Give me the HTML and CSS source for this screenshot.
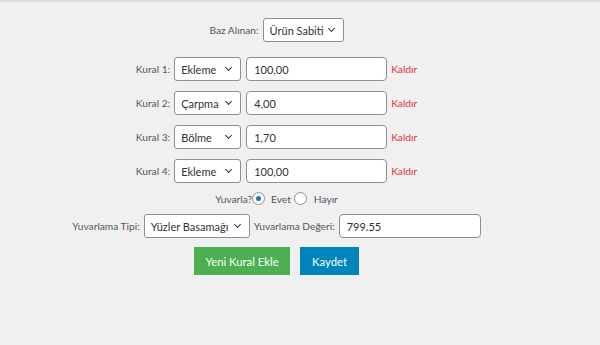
FILE: index.html
```html
<!DOCTYPE html>
<html lang="tr">
<head>
<meta charset="utf-8">
<link rel="stylesheet" href="styles.css">
</head>
<body>
<div class="topline"></div>
<div class="wrap">
  <div class="row base">
    <span class="lbl">Baz Alınan:</span>
    <span class="sel w-base">Ürün Sabiti<i class="chev"></i></span>
  </div>
  <div class="rules">
    <div class="row rule">
      <span class="lbl">Kural 1:</span>
      <span class="sel w-op">Ekleme<i class="chev"></i></span>
      <span class="inp w-val">100,00</span>
      <span class="remove">Kaldır</span>
    </div>
    <div class="row rule">
      <span class="lbl">Kural 2:</span>
      <span class="sel w-op">Çarpma<i class="chev"></i></span>
      <span class="inp w-val">4,00</span>
      <span class="remove">Kaldır</span>
    </div>
    <div class="row rule">
      <span class="lbl">Kural 3:</span>
      <span class="sel w-op">Bölme<i class="chev"></i></span>
      <span class="inp w-val">1,70</span>
      <span class="remove">Kaldır</span>
    </div>
    <div class="row rule">
      <span class="lbl">Kural 4:</span>
      <span class="sel w-op">Ekleme<i class="chev"></i></span>
      <span class="inp w-val">100,00</span>
      <span class="remove">Kaldır</span>
    </div>
  </div>
  <div class="row round">
    <span class="lbl">Yuvarla?</span>
    <span class="radio on"></span>
    <span class="lbl opt">Evet</span>
    <span class="radio"></span>
    <span class="lbl opt2">Hayır</span>
  </div>
  <div class="row tipi">
    <span class="lbl">Yuvarlama Tipi:</span>
    <span class="sel w-tip">Yüzler Basamağı<i class="chev"></i></span>
    <span class="lbl">Yuvarlama Değeri:</span>
    <span class="inp w-rv">799.55</span>
  </div>
  <div class="row btns">
    <span class="btn green">Yeni Kural Ekle</span>
    <span class="btn blue">Kaydet</span>
  </div>
</div>
</body>
</html>
```
FILE: styles.css
```css
html, body {
  margin: 0;
  padding: 0;
  background: #f0f0f1;
  width: 600px;
  height: 345px;
  overflow: hidden;
  font-family: Lato, "Open Sans", sans-serif;
  color: #50575e;
}
.topline {
  height: 2px;
  background: #dcdcde;
}
.wrap {
  width: 553px;
  display: flex;
  flex-direction: column;
  align-items: center;
  padding-top: 16px;
}
.row {
  display: flex;
  align-items: center;
  justify-content: center;
  gap: 4px;
  white-space: nowrap;
}
.lbl {
  font-size: 10.2px;
  color: #50575e;
}
.sel, .inp {
  box-sizing: border-box;
  background: #fff;
  border: 1px solid #8c8f94;
  font-size: 11px;
  color: #2c3338;
  display: flex;
  align-items: center;
  white-space: nowrap;
}
.sel {
  height: 24px;
  border-radius: 3px;
  padding: 0 9px 0 6px;
  justify-content: space-between;
}
.inp {
  height: 24px;
  border-radius: 4px;
  padding: 0 7px;
}
.chev {
  width: 4px;
  height: 4px;
  border-right: 1.5px solid #2c3338;
  border-bottom: 1.5px solid #2c3338;
  transform: rotate(45deg);
  margin-top: -3px;
  flex: none;
}
.w-base { width: 81px; }
.w-op { width: 67px; }
.w-val { width: 141px; }
.w-tip { width: 106px; }
.w-rv { width: 142px; }
.rules {
  margin-top: 15px;
  display: flex;
  flex-direction: column;
  gap: 10px;
}
.rule .w-val { margin-left: 1px; }
.remove {
  font-size: 10.2px;
  color: #d63638;
}
.round {
  margin-top: 9px;
  gap: 0;
}
.radio {
  box-sizing: border-box;
  width: 13px;
  height: 13px;
  border-radius: 50%;
  border: 1px solid #8c8f94;
  background: #fff;
  position: relative;
}
.radio.on::after {
  content: "";
  position: absolute;
  left: 3px;
  top: 3px;
  width: 5px;
  height: 5px;
  border-radius: 50%;
  background: #2271b1;
}
.round .radio:first-of-type { margin-left: 5px; }
.opt { margin: 0 3px 0 6px; }
.opt2 { margin-left: 7px; }
.tipi { margin-top: 9px; gap: 4px; }
.btns {
  margin-top: 9px;
  gap: 10px;
}
.btn {
  height: 28px;
  display: flex;
  align-items: center;
  justify-content: center;
  font-size: 11.3px;
  color: #fff;
}
.green { width: 96px; background: #4caf50; }
.blue { width: 59px; background: #0085ba; }
```
